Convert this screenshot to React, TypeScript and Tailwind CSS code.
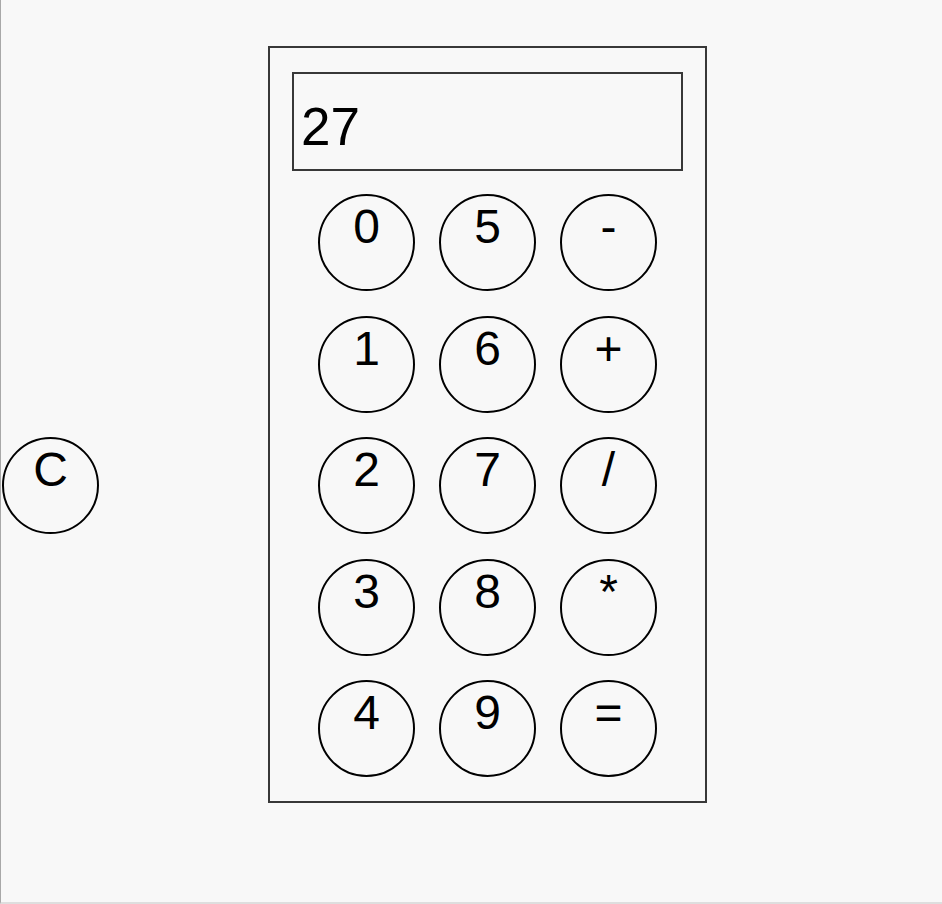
import React from 'react';

// Keys laid out column by column, as in the sketch.
const KEYS = ['0', '5', '-', '1', '6', '+', '2', '7', '/', '3', '8', '*', '4', '9', '='];

function Key({ label }: { label: string }) {
  return (
    <button className="w-[97px] h-[97px] rounded-full border-2 border-black bg-transparent flex items-start justify-center pt-[3px] text-[48px] leading-[1.149] text-black font-['Liberation_Sans',Arial,sans-serif]">
      {label}
    </button>
  );
}

export default function App() {
  return (
    <div className="w-[942px] h-[904px] bg-[#f8f8f8] border-l border-[#a8a8a8] border-b-2 border-b-[#dedede] flex items-start overflow-hidden">
      {/* Clear key sits outside the calculator */}
      <div className="mt-[437px] ml-[1px]">
        <Key label="C" />
      </div>

      <div className="ml-[169px] mt-[46px] w-[439px] h-[757px] border-2 border-[#383838] flex flex-col items-center">
        <div className="mt-[24px] w-[391px] h-[99px] border-2 border-[#383838] pl-[7px] pt-[23px] text-[53px] leading-[1.149] text-black font-['Liberation_Sans',Arial,sans-serif]">
          27
        </div>

        <div className="mt-[23px] grid grid-cols-[97px_97px_97px] gap-x-[24px] gap-y-[24.5px]">
          {KEYS.map((k) => (
            <Key key={k} label={k} />
          ))}
        </div>
      </div>
    </div>
  );
}
